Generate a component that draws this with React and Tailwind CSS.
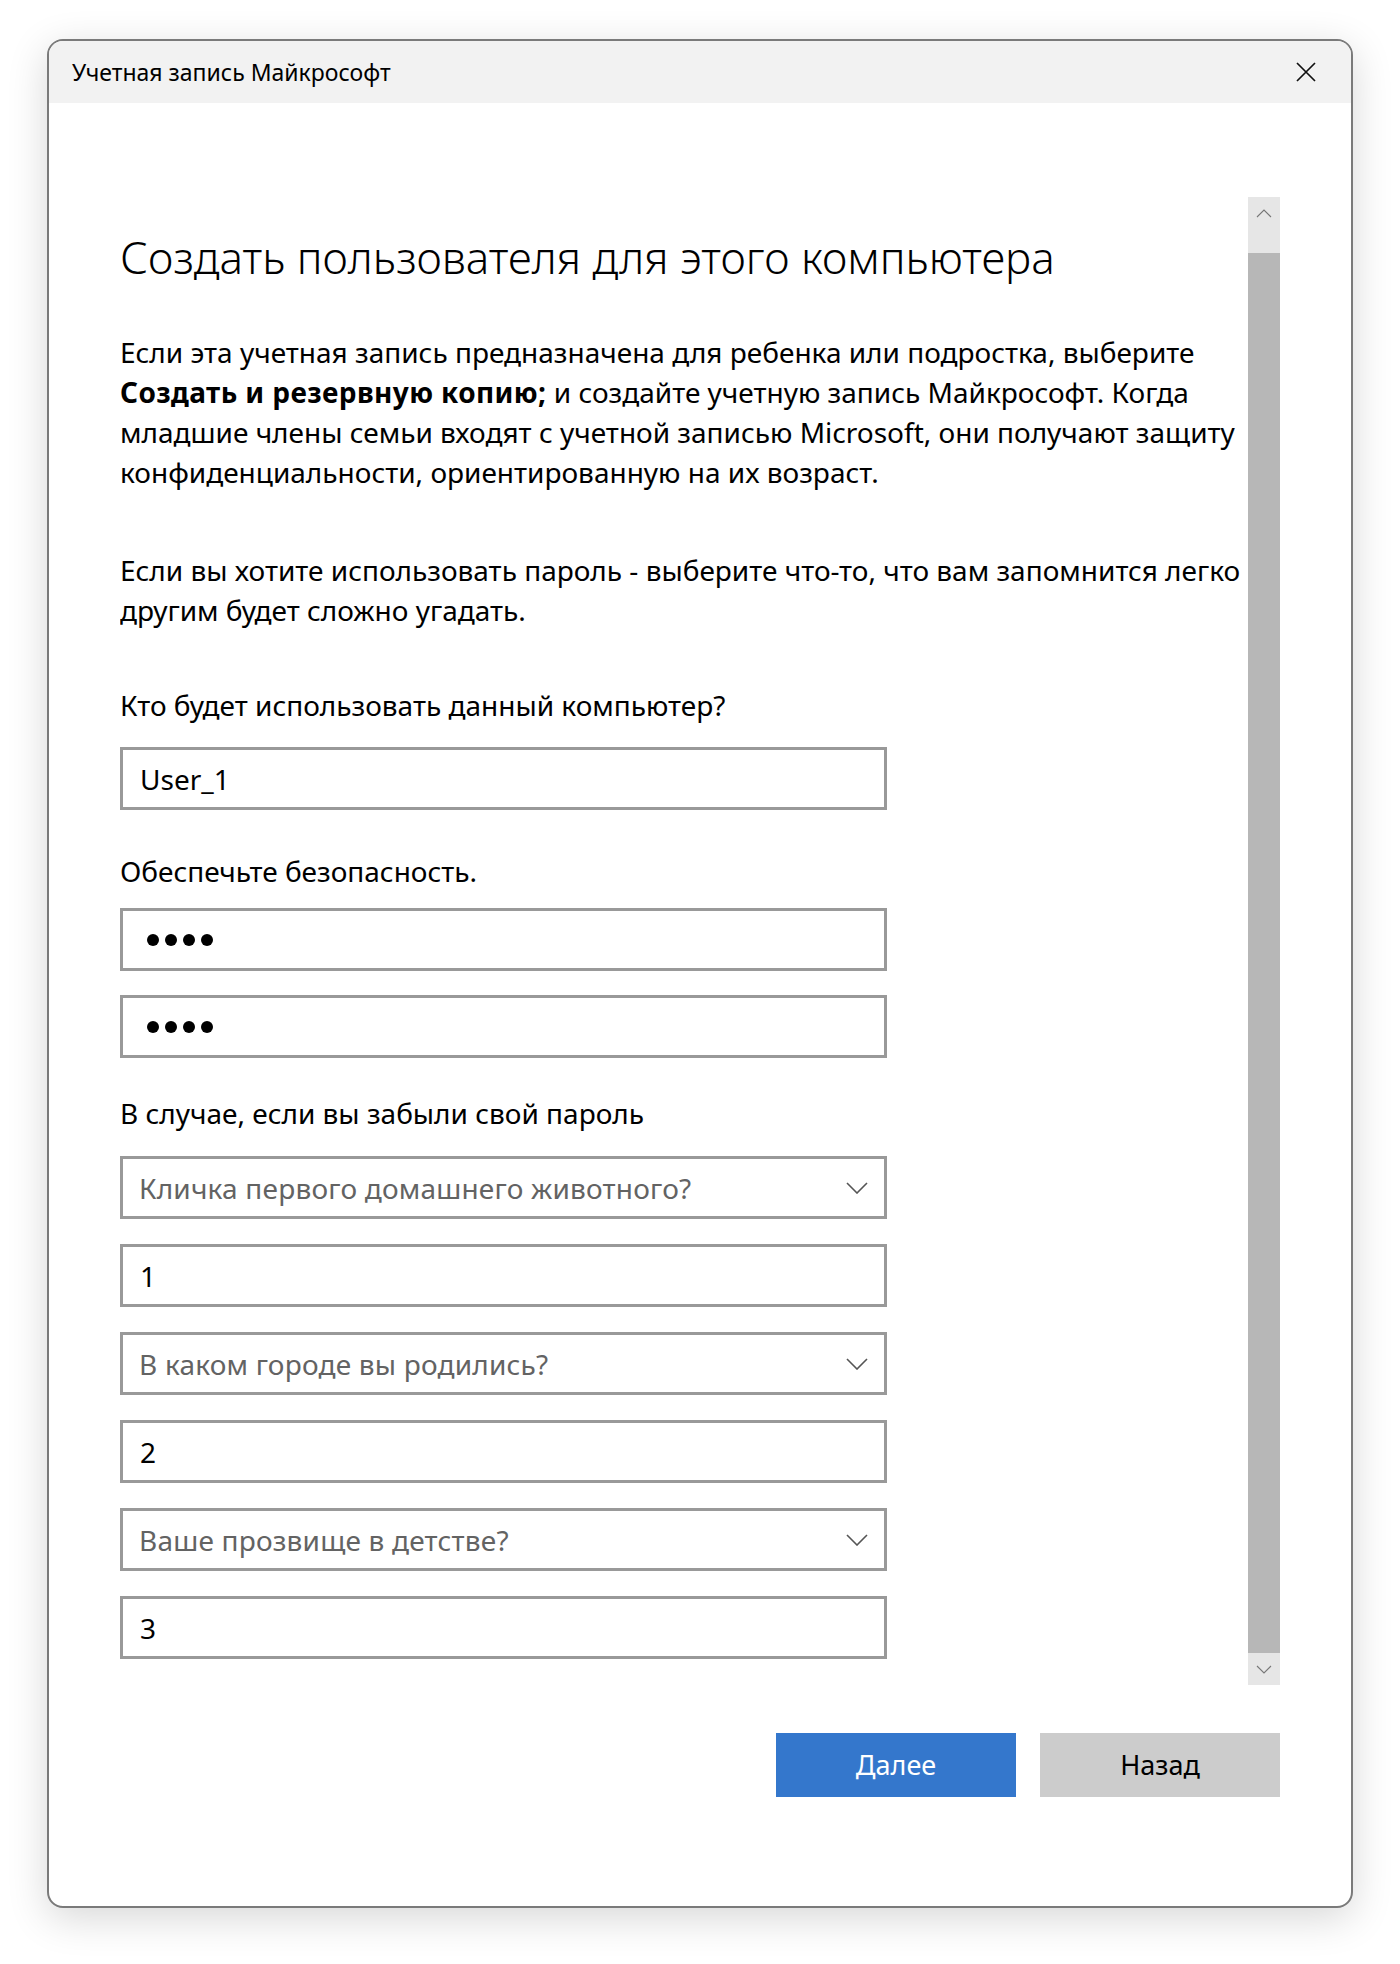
import React from "react";

function Chevron() {
  return (
    <svg width="22" height="12" viewBox="0 0 22 12" fill="none">
      <path d="M1 1 L11 11 L21 1" stroke="#555555" strokeWidth="1.6" />
    </svg>
  );
}

function TextField({ children }) {
  return (
    <div className="h-[63px] w-[767px] border-[3px] border-[#999999] bg-white flex items-center pl-[17px] text-[28px] text-black">
      {children}
    </div>
  );
}

function SelectField({ children }) {
  return (
    <div className="h-[63px] w-[767px] border-[3px] border-[#999999] bg-white flex items-center justify-between pl-[16px] pr-[16px] text-[28px] text-[#636363]">
      <span className="tracking-[0.2px]">{children}</span>
      <Chevron />
    </div>
  );
}

function Dots() {
  return (
    <div className="h-[63px] w-[767px] border-[3px] border-[#999999] bg-white flex items-center pl-[24px] gap-[6px]">
      <span className="w-[12px] h-[12px] rounded-full bg-black" />
      <span className="w-[12px] h-[12px] rounded-full bg-black" />
      <span className="w-[12px] h-[12px] rounded-full bg-black" />
      <span className="w-[12px] h-[12px] rounded-full bg-black" />
    </div>
  );
}

export default function App() {
  return (
    <div className="w-[1400px] h-[1964px] bg-white pt-[39px] pl-[47px] font-['Noto_Sans','Open_Sans',sans-serif] text-black">
      <div className="w-[1306px] h-[1869px] rounded-[16px] border-2 border-[#7a7a7a] bg-white overflow-hidden flex flex-col shadow-[0_10px_40px_rgba(0,0,0,0.16)]">
        {/* Title bar */}
        <div className="h-[62px] shrink-0 bg-[#f2f2f2] flex items-center justify-between pl-[23px] pr-[35px]">
          <span className="text-[23px] leading-none">Учетная запись Майкрософт</span>
          <svg width="20" height="20" viewBox="0 0 20 20" fill="none">
            <path d="M1 1 L19 19 M19 1 L1 19" stroke="#111111" strokeWidth="1.7" />
          </svg>
        </div>

        {/* Body */}
        <div className="flex-1 flex flex-col px-[71px] pt-[94px]">
          <div className="h-[1488px] flex">
            {/* Content column */}
            <div className="w-[1128px] overflow-hidden flex flex-col">
              <h1 className="mt-[30px] text-[44px] leading-[60px] font-light whitespace-nowrap">
                Создать пользователя для этого компьютера
              </h1>
              <p className="mt-[45px] text-[28px] leading-[40px] whitespace-nowrap">
                Если эта учетная запись предназначена для ребенка или подростка, выберите
                <br />
                <b className="font-bold tracking-[0.4px]">Создать и резервную копию;</b> и создайте учетную запись Майкрософт. Когда
                <br />
                младшие члены семьи входят с учетной записью Microsoft, они получают защиту
                <br />
                конфиденциальности, ориентированную на их возраст.
              </p>
              <p className="mt-[58px] text-[28px] leading-[40px] whitespace-nowrap">
                Если вы хотите использовать пароль - выберите что-то, что вам запомнится легко
                <br />
                другим будет сложно угадать.
              </p>
              <div className="mt-[55px] text-[28px] leading-[40px]">Кто будет использовать данный компьютер?</div>
              <div className="mt-[22px]">
                <TextField>User_1</TextField>
              </div>
              <div className="mt-[41px] text-[28px] leading-[40px]">Обеспечьте безопасность.</div>
              <div className="mt-[17px]">
                <Dots />
              </div>
              <div className="mt-[24px]">
                <Dots />
              </div>
              <div className="mt-[35px] text-[28px] leading-[40px]">В случае, если вы забыли свой пароль</div>
              <div className="mt-[23px] flex flex-col gap-[25px]">
                <SelectField>Кличка первого домашнего животного?</SelectField>
                <TextField>1</TextField>
                <SelectField>В каком городе вы родились?</SelectField>
                <TextField>2</TextField>
                <SelectField>Ваше прозвище в детстве?</SelectField>
                <TextField>3</TextField>
              </div>
            </div>
            {/* Scrollbar */}
            <div className="w-[32px] flex flex-col">
              <div className="h-[56px] bg-[#e6e6e6] flex justify-center pt-[12px]">
                <svg width="16" height="9" viewBox="0 0 16 9" fill="none">
                  <path d="M1 8 L8 1 L15 8" stroke="#777777" strokeWidth="1.1" />
                </svg>
              </div>
              <div className="flex-1 bg-[#b7b7b7]" />
              <div className="h-[32px] bg-[#e6e6e6] flex justify-center pt-[12px]">
                <svg width="16" height="9" viewBox="0 0 16 9" fill="none">
                  <path d="M1 1 L8 8 L15 1" stroke="#777777" strokeWidth="1.1" />
                </svg>
              </div>
            </div>
          </div>

          {/* Buttons */}
          <div className="mt-[48px] flex justify-end gap-[24px]">
            <button className="w-[240px] h-[64px] bg-[#3477cc] text-white text-[27px]">Далее</button>
            <button className="w-[240px] h-[64px] bg-[#cccccc] text-black text-[27px]">Назад</button>
          </div>
        </div>
      </div>
    </div>
  );
}
